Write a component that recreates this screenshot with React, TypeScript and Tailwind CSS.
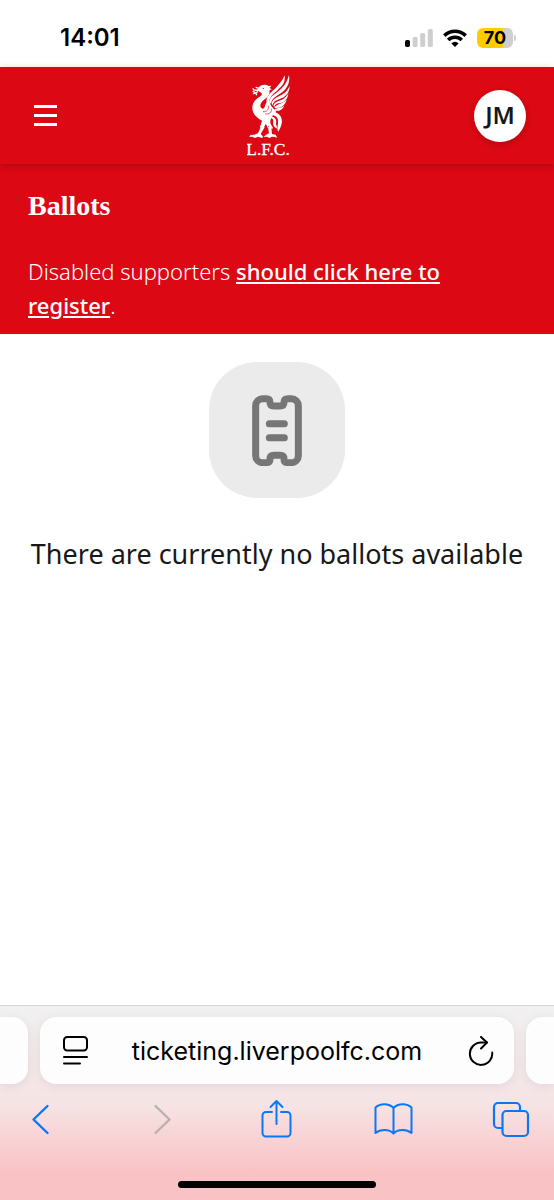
import React from 'react';

function StatusBar() {
  return (
    <div className="flex h-[67px] items-center justify-between pt-2 pr-[38px] pl-[60px] font-['Inter',sans-serif]">
      <span className="text-2xl font-semibold text-black">14:01</span>
      <div className="flex items-center gap-2.5">
        <svg className="h-[18px] w-7" viewBox="0 0 28 18" aria-hidden="true">
          <rect x="0" y="11" width="5" height="7" rx="1.8" fill="#000" />
          <rect x="7.6" y="8" width="5" height="10" rx="1.6" fill="#cfcfcf" />
          <rect x="15.2" y="4" width="5" height="14" rx="1.6" fill="#cfcfcf" />
          <rect x="22.8" y="0" width="5" height="18" rx="1.6" fill="#cfcfcf" />
        </svg>
        <svg className="h-[18px] w-6" viewBox="0 0 24 18" fill="none" stroke="#000" strokeWidth="3.6" aria-hidden="true">
          <path d="M1.3 6.6a15.4 15.4 0 0 1 21.4 0" />
          <path d="M5.2 11a9.8 9.8 0 0 1 13.6 0" />
          <path d="M12 18l-3.600-3.600a5 5 0 0 1 7.200 0z" fill="#000" stroke="none" />
        </svg>
        <div className="flex items-center gap-px">
          <div className="flex h-5 w-9 items-center justify-center rounded-md bg-linear-to-r from-[#ffcc00] from-72% to-[#cfcfcf] to-72% text-lg font-bold text-black">
            70
          </div>
          <span className="h-1.5 w-0.5 rounded-r-full bg-[#cfcfcf]" />
        </div>
      </div>
    </div>
  );
}

function Logo() {
  return (
    <svg className="h-[84px] w-11" viewBox="36 24 132 252" fill="#fff" role="img" aria-label="L.F.C.">
      {/* head, neck and body */}
      <path d="M72 63C79 56 92 54 101 60L109 59L104 66L110 70L103 73C106 83 99 92 89 100C78 108 74 116 77 124C80 129 85 129 88 125C92 113 95 106 103 98C103 112 108 123 122 133C125 140 120 146 113 148C108 158 105 163 106 171L113 185L104 188L101 179L98 184L92 173L89 181L83 187L75 184L81 164C64 155 52 143 52 125C52 109 64 98 76 91C82 87 82 82 76 79L70 75L62 75L67 70Z" />
      <path d="M72 67L62 64M66 73L56 72M69 77L54 84M61 80L53 76M62 79L65 88M57 72L53 67" fill="none" stroke="#fff" strokeWidth="4" />
      <circle cx="85" cy="67" r="2" fill="#dc0814" />
      {/* wing feathers */}
      <path d="M94 107C95 84 115 76 130 57C140 46 146 36 149 28C153 50 139 62 126 74C116 82 107 89 100 109Z" />
      <path d="M103 109C103 92 119 86 137 70C149 59 158 44 162 27C167 53 152 72 138 81C123 92 112 95 108 113Z" />
      <path d="M110 113C113 97 126 95 144 84C153 78 160 70 164 59C164 83 149 94 134 99C123 103 116 105 113 118Z" />
      <path d="M115 119C119 105 133 106 146 98C152 94 157 88 160 81C159 103 145 110 132 112C124 113 120 115 118 123Z" />
      <path d="M118 125C125 113 138 116 155 102C149 122 135 125 122 127Z" />
      <path d="M119 130C128 124 138 127 148 119C142 133 130 136 122 134Z" />
      <path d="M84 137C96 138 101 130 101 119M91 144C104 145 111 138 109 128" fill="none" stroke="#dc0814" strokeWidth="2" />
      {/* tail */}
      <path d="M113 138C132 138 144 154 140 173C138 183 133 190 130 197C125 190 128 182 129 173C131 158 125 149 112 148Z" />
      <path d="M109 151C121 154 126 163 123 174L127 188C115 184 113 174 115 166C115 160 112 157 108 156Z" />
      {/* legs and feet */}
      <path d="M77 184L69 202L58 206L46 207L43 213L52 212L60 216L70 212L80 216L85 213L80 207L77 204L88 185Z" />
      <path d="M99 184L102 202L93 206L86 213L96 212L103 216L111 212L119 213L127 215L122 206L111 204L109 186Z" />
      <path d="M75 181L88 185M98 184L113 186" stroke="#fff" strokeWidth="4" />
      <text x="34" y="266" fontSize="52" fontFamily="Liberation Serif, serif" stroke="#fff" strokeWidth="1">L.F.C.</text>
    </svg>
  );
}

function Header() {
  return (
    <header className="relative flex h-[97px] items-center justify-between bg-[#dc0814] px-7 shadow-[0_2px_8px_rgba(0,0,0,0.2)]">
      <button type="button" aria-label="Menu" className="flex w-9 flex-col gap-1.5 pr-[7px] pl-1.5">
        <span className="h-[3px] w-full bg-white" />
        <span className="h-[3px] w-full bg-white" />
        <span className="h-[3px] w-full bg-white" />
      </button>
      <Logo />
      <button
        type="button"
        className="size-[52px] rounded-full bg-white pb-0.5 text-2xl font-semibold text-[#181818] shadow-[0_2px_6px_rgba(0,0,0,0.2)]"
      >
        JM
      </button>
    </header>
  );
}

function TicketIcon() {
  return (
    <svg
      className="h-[72px] w-[50px]"
      viewBox="156 132 150 216"
      fill="none"
      stroke="#767676"
      strokeWidth="21"
      strokeLinecap="round"
      aria-hidden="true"
    >
      <path d="M167 167a21 21 0 0 1 21-21h10q12 0 12 11q0 11 12 11h18q12 0 12-11q0-11 12-11h10a21 21 0 0 1 21 21v150a21 21 0 0 1-21 21h-10q-12 0-12-11q0-11-12-11h-18q-12 0-12 11q0 11-12 11h-10a21 21 0 0 1-21-21z" />
      <path d="M208 221h45M208 263h45" />
    </svg>
  );
}

function AddressBar() {
  return (
    <div className="flex h-[67px] gap-3">
      <div className="w-7 rounded-r-2xl bg-[#fdfdfd] shadow-[0_2px_12px_rgba(0,0,0,0.08)]" />
      <div className="flex flex-1 items-center justify-between rounded-2xl bg-[#fdfdfd] px-5 text-black shadow-[0_2px_12px_rgba(0,0,0,0.08)]">
        <button type="button" aria-label="Page menu">
          <svg className="size-[30px]" viewBox="0 0 30 30" fill="none" stroke="currentColor" strokeWidth="2" strokeLinecap="round">
            <rect x="4" y="1" width="23" height="13.500" rx="3.2" />
            <path d="M4 21h23M4 27.500h16" />
          </svg>
        </button>
        <a href="#" className="text-[25px] leading-8">ticketing.liverpoolfc.com</a>
        <button type="button" aria-label="Reload">
          <svg className="size-[30px]" viewBox="0 0 30 30" fill="none" stroke="currentColor" strokeWidth="2" strokeLinecap="round" strokeLinejoin="round">
            <path d="M22.500 6.500H17A11.200 11.200 0 1 0 28.200 16.500" />
            <path d="M17 1l6 5.500-6 6" />
          </svg>
        </button>
      </div>
      <div className="w-7 rounded-l-2xl bg-[#fdfdfd] shadow-[0_2px_12px_rgba(0,0,0,0.08)]" />
    </div>
  );
}

function Toolbar() {
  return (
    <nav className="flex items-center justify-between pt-3.5 pr-6 pl-5 text-[#0a78f5]">
      <button type="button" aria-label="Back">
        <svg className="size-10" viewBox="0 0 40 40" fill="none" stroke="currentColor" strokeWidth="2.4" strokeLinecap="round" strokeLinejoin="round">
          <path d="M27.500 8L13.500 21.500L27.500 35" />
        </svg>
      </button>
      <button type="button" aria-label="Forward" disabled className="text-[#b9b0b0]">
        <svg className="size-10" viewBox="0 0 40 40" fill="none" stroke="currentColor" strokeWidth="2.4" strokeLinecap="round" strokeLinejoin="round">
          <path d="M17.500 8L31.500 21.500L17.500 35" />
        </svg>
      </button>
      <button type="button" aria-label="Share">
        <svg className="size-10" viewBox="0 0 40 40" fill="none" stroke="currentColor" strokeWidth="2" strokeLinecap="round" strokeLinejoin="round">
          <path d="M17 14H11a3.500 3.500 0 0 0-3.500 3.500v17.500a3.500 3.500 0 0 0 3.500 3.500h21a3.500 3.500 0 0 0 3.500-3.500V17.500a3.500 3.500 0 0 0-3.500-3.500h-6" />
          <path d="M21.500 26V3M15.500 9l6-6 6 6" />
        </svg>
      </button>
      <button type="button" aria-label="Bookmarks">
        <svg className="size-10" viewBox="0 0 40 40" fill="none" stroke="currentColor" strokeWidth="2" strokeLinejoin="round">
          <path d="M20.500 10C16 5 7 5 2.500 9.500V35c5-4 13.500-4 18 .5c4.500-4.500 13-4.500 18-.5V9.500C34 5 25 5 20.500 10zV35" />
        </svg>
      </button>
      <button type="button" aria-label="Tabs">
        <svg className="size-10" viewBox="0 0 40 40" fill="none" stroke="currentColor" strokeWidth="2.2" strokeLinejoin="round">
          <rect x="12.500" y="13" width="25.500" height="25" rx="4" />
          <path d="M12.500 30H8a4 4 0 0 1-4-4V9a4 4 0 0 1 4-4h18a4 4 0 0 1 4 4v4" />
        </svg>
      </button>
    </nav>
  );
}

export default function App() {
  return (
    <div className="flex min-h-screen flex-col bg-white font-['Noto_Sans',sans-serif]">
      <StatusBar />
      <Header />
      <section className="bg-[#dc0814] px-7 pt-6 pb-3 text-white">
        <h1 className="font-['Liberation_Serif',serif] text-[28px] leading-9 font-bold">Ballots</h1>
        <p className="mt-[30px] text-[22px] leading-[34px] font-light">
          Disabled supporters{' '}
          <a href="#" className="font-medium underline underline-offset-2">
            should click here to register
          </a>
          .
        </p>
      </section>
      <main className="flex flex-1 flex-col items-center px-5 pt-7">
        <div className="flex size-[136px] items-center justify-center rounded-[48px] bg-[#ebebeb]">
          <TicketIcon />
        </div>
        <p className="mt-[38px] text-center text-[27px] leading-9 text-[#181818]">
          There are currently no ballots available
        </p>
      </main>
      <footer className="overflow-hidden border-t border-[#d6d6d6] bg-linear-to-b from-[#f1f1f1] via-[#f6e4e5] via-50% to-[#f9c3c6] to-85% pt-[11px] pb-3 font-['Inter',sans-serif]">
        <AddressBar />
        <Toolbar />
        <div className="mx-auto mt-[43px] h-[7px] w-[198px] rounded-full bg-black" />
      </footer>
    </div>
  );
}
